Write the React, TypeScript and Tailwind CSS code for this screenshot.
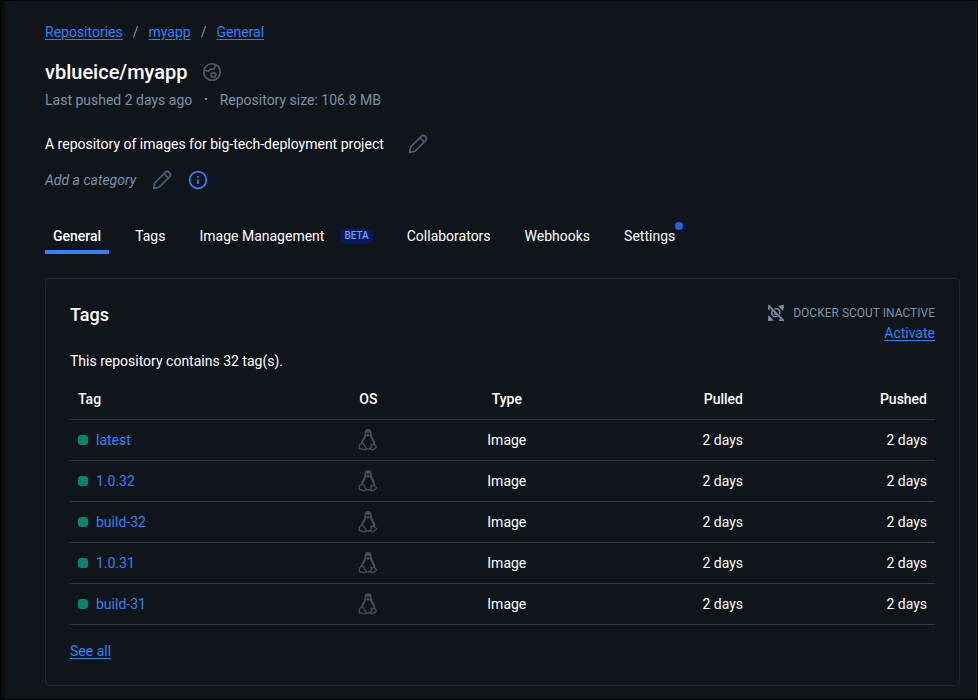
import React from "react";

const tags = ["latest", "1.0.32", "build-32", "1.0.31", "build-31"];

const linkClass = "text-[#2e83f6] underline underline-offset-2";

function GlobeIcon() {
  return (
    <svg width="22" height="22" viewBox="0 0 24 24" fill="none" stroke="#55585d" strokeWidth="1.9" strokeLinejoin="round" aria-label="Public">
      <circle cx="12" cy="12" r="9" />
      <path d="M3.5 9.5 8 11.4l2.2-2.2 4-.5 1.3-2.8-.6-2.2" />
      <path d="M11 13.8l3.9-.8 1.6 1.6-1.5 2.9-3.3-.3z" />
    </svg>
  );
}

function PencilIcon() {
  return (
    <svg width="20" height="20" viewBox="0 0 20 20" fill="none" stroke="#4d6478" strokeWidth="1.6" strokeLinejoin="round" aria-hidden="true">
      <path d="M1.6 18.4 2.7 13 13.6 2.1a2.3 2.3 0 0 1 3.3 0l1 1a2.3 2.3 0 0 1 0 3.3L7 17.3z" />
      <path d="M12 3.8 16.2 8" />
    </svg>
  );
}

function InfoIcon() {
  return (
    <svg width="20" height="20" viewBox="0 0 20 20" fill="none" stroke="#2e83f6" strokeWidth="1.7" aria-hidden="true">
      <circle cx="10" cy="10" r="8.4" />
      <path d="M10 9.2V14M10 6v1.8" />
    </svg>
  );
}

function ScoutIcon() {
  return (
    <svg width="18" height="18" viewBox="0 0 18 18" fill="none" stroke="#7794ab" aria-hidden="true">
      <path d="M1.2 1.2 16.8 16.8" strokeWidth="1.7" />
      <path d="M11 1.8 17 1l-.8 6zM1.4 11 1 17l6-.6z" fill="#7794ab" stroke="none" />
      <path d="M1 2.6v3.2l2.6-.6zM12.6 14.6l-.4 2.4H16z" fill="#7794ab" stroke="none" />
      <path d="M5.6 6.2c-1.3 2-1 4.4.6 5.6 1.2 1 3 1 4.2.2M7.6 4.9c1.6-.6 3.4-.2 4.4 1.1 1.1 1.3 1.2 3 .5 4.4" strokeWidth="1.5" />
      <path d="M8 8.6c-.4 1.1.4 2 1.5 1.8" strokeWidth="1.3" />
    </svg>
  );
}

function LinuxIcon() {
  return (
    <svg className="mx-auto block" width="20" height="24" viewBox="0 0 20 24" fill="none" stroke="#4b4e53" strokeLinejoin="round" strokeLinecap="round" role="img" aria-label="Linux">
      <path d="M7.2 7.2C7.4 10.2 3.9 12 3.9 15.4" strokeWidth="2" />
      <path d="M12.9 7C12.9 9.8 16.1 12 16.2 15.6" strokeWidth="2.2" />
      <path d="M6.6 7.5V4.6C6.6 2.2 8 1 10 1s3.6 1.2 3.6 3.6v3.2l-1.5-.9V5.2l-1-.9L10 5.4 8.8 4.3l-.9.9v2z" fill="#4b4e53" stroke="none" />
      <path d="m8.2 7.2 1.8 1.2 1.9-1.2-1.9-.8z" fill="#4b4e53" strokeWidth=".8" />
      <path d="M4.3 14.8c1.5.6 2.3 3.2 3.6 5 .6 1-.2 2.2-1.8 2-1.7-.4-3.2-1-4.8-1.3.5-1.5-.2-2.5.2-3.7.9-.1 1.5-1.1 2.8-2z" fill="#10151b" strokeWidth="1.3" />
      <path d="M13.2 16.2c.8 1 1.9 1 3.2-.3.4 1.8 1.4 2.3 2.2 2.7-.4 1.6-2.1 1.9-3.3 3-.8.6-2.2.4-2.4-.8-.1-1.2.4-3 .3-4.6z" fill="#10151b" strokeWidth="1.3" />
      <path d="M8.3 20.6c1.3.4 3.1.3 4.3-.1" strokeWidth="1.5" />
    </svg>
  );
}

export default function App() {
  return (
    <div className="flex min-h-screen border border-black bg-[#10151b] font-['Roboto','Liberation_Sans',sans-serif] text-sm leading-5 text-white">
      <div className="w-1 shrink-0 bg-[#090c10]" />
      <main className="min-w-0 flex-1 border-r border-[#1b2229] pt-[21px] pr-4 pb-3 pl-10">
        <nav aria-label="Breadcrumb" className="flex gap-2.5">
          <a href="#repositories" className={linkClass}>Repositories</a>
          <span className="text-[#7794ab]">/</span>
          <a href="#myapp" className={linkClass}>myapp</a>
          <span className="text-[#7794ab]">/</span>
          <a href="#general" className={linkClass}>General</a>
        </nav>

        <header>
          <div className="mt-4 flex items-center gap-3.5">
            <h1 className="text-xl leading-7 font-medium">vblueice/myapp</h1>
            <GlobeIcon />
          </div>
          <div className="mt-1 flex gap-3 text-[#7794ab]">
            <span>Last pushed 2 days ago</span>
            <span className="text-[10px]">•</span>
            <span>Repository size: 106.8 MB</span>
          </div>
          <div className="mt-6 flex items-center gap-6">
            <p>A repository of images for big-tech-deployment project</p>
            <button type="button" aria-label="Edit description"><PencilIcon /></button>
          </div>
          <div className="mt-4 flex items-center gap-4">
            <span className="text-[#7794ab] italic">Add a category</span>
            <button type="button" aria-label="Edit category"><PencilIcon /></button>
            <button type="button" aria-label="About categories"><InfoIcon /></button>
          </div>
        </header>

        <nav aria-label="Repository sections" className="mt-7 flex gap-[18px]">
          <a href="#general" aria-current="page" className="border-b-4 border-[#2e83f6] px-2 pt-2 pb-1 font-medium">General</a>
          <a href="#tags" className="px-2 py-2">Tags</a>
          <a href="#image-management" className="flex items-center gap-4 p-2">
            Image Management
            <span className="rounded-full bg-[#07195a] px-1 text-[10px] leading-4 font-medium text-[#5fa8fa]">BETA</span>
          </a>
          <a href="#collaborators" className="px-2 py-2">Collaborators</a>
          <a href="#webhooks" className="px-2 py-2">Webhooks</a>
          <a href="#settings" className="relative px-2 py-2">
            Settings
            <span className="absolute top-1 right-0 size-2 rounded-full bg-[#1d63ed]" />
          </a>
        </nav>

        <section className="mt-6 rounded border border-[#202830] p-6">
          <div className="flex items-start justify-between">
            <h2 className="text-lg leading-6 font-medium">Tags</h2>
            <div className="text-right">
              <div className="flex items-center gap-2 text-xs leading-5 text-[#7794ab]">
                <ScoutIcon />
                DOCKER SCOUT INACTIVE
              </div>
              <a href="#activate" className={linkClass}>Activate</a>
            </div>
          </div>
          <p className="mt-2">This repository contains 32 tag(s).</p>
          <table className="mt-2 w-full table-fixed border-collapse">
            <thead>
              <tr className="h-10 border-b border-[#2b3a47]">
                <th className="w-[30%] px-2 text-left font-medium">Tag</th>
                <th className="w-[9%] px-2 text-center font-medium">OS</th>
                <th className="w-[23%] px-2 text-center font-medium">Type</th>
                <th className="px-2 text-right font-medium">Pulled</th>
                <th className="w-46 px-2 text-right font-medium">Pushed</th>
              </tr>
            </thead>
            <tbody>
              {tags.map((tag) => (
                <tr key={tag} className="h-[41px] border-b border-[#2b3a47]">
                  <td className="px-2">
                    <div className="flex items-center gap-2">
                      <span className="size-2.5 rounded-[3px] bg-[#068471]" />
                      <a href={`#${tag}`} className="text-[#2e83f6]">{tag}</a>
                    </div>
                  </td>
                  <td className="px-2"><LinuxIcon /></td>
                  <td className="px-2 text-center">Image</td>
                  <td className="px-2 text-right">2 days</td>
                  <td className="px-2 text-right">2 days</td>
                </tr>
              ))}
            </tbody>
          </table>
          <a href="#all-tags" className={"mt-4 inline-block " + linkClass}>See all</a>
        </section>
      </main>
    </div>
  );
}
